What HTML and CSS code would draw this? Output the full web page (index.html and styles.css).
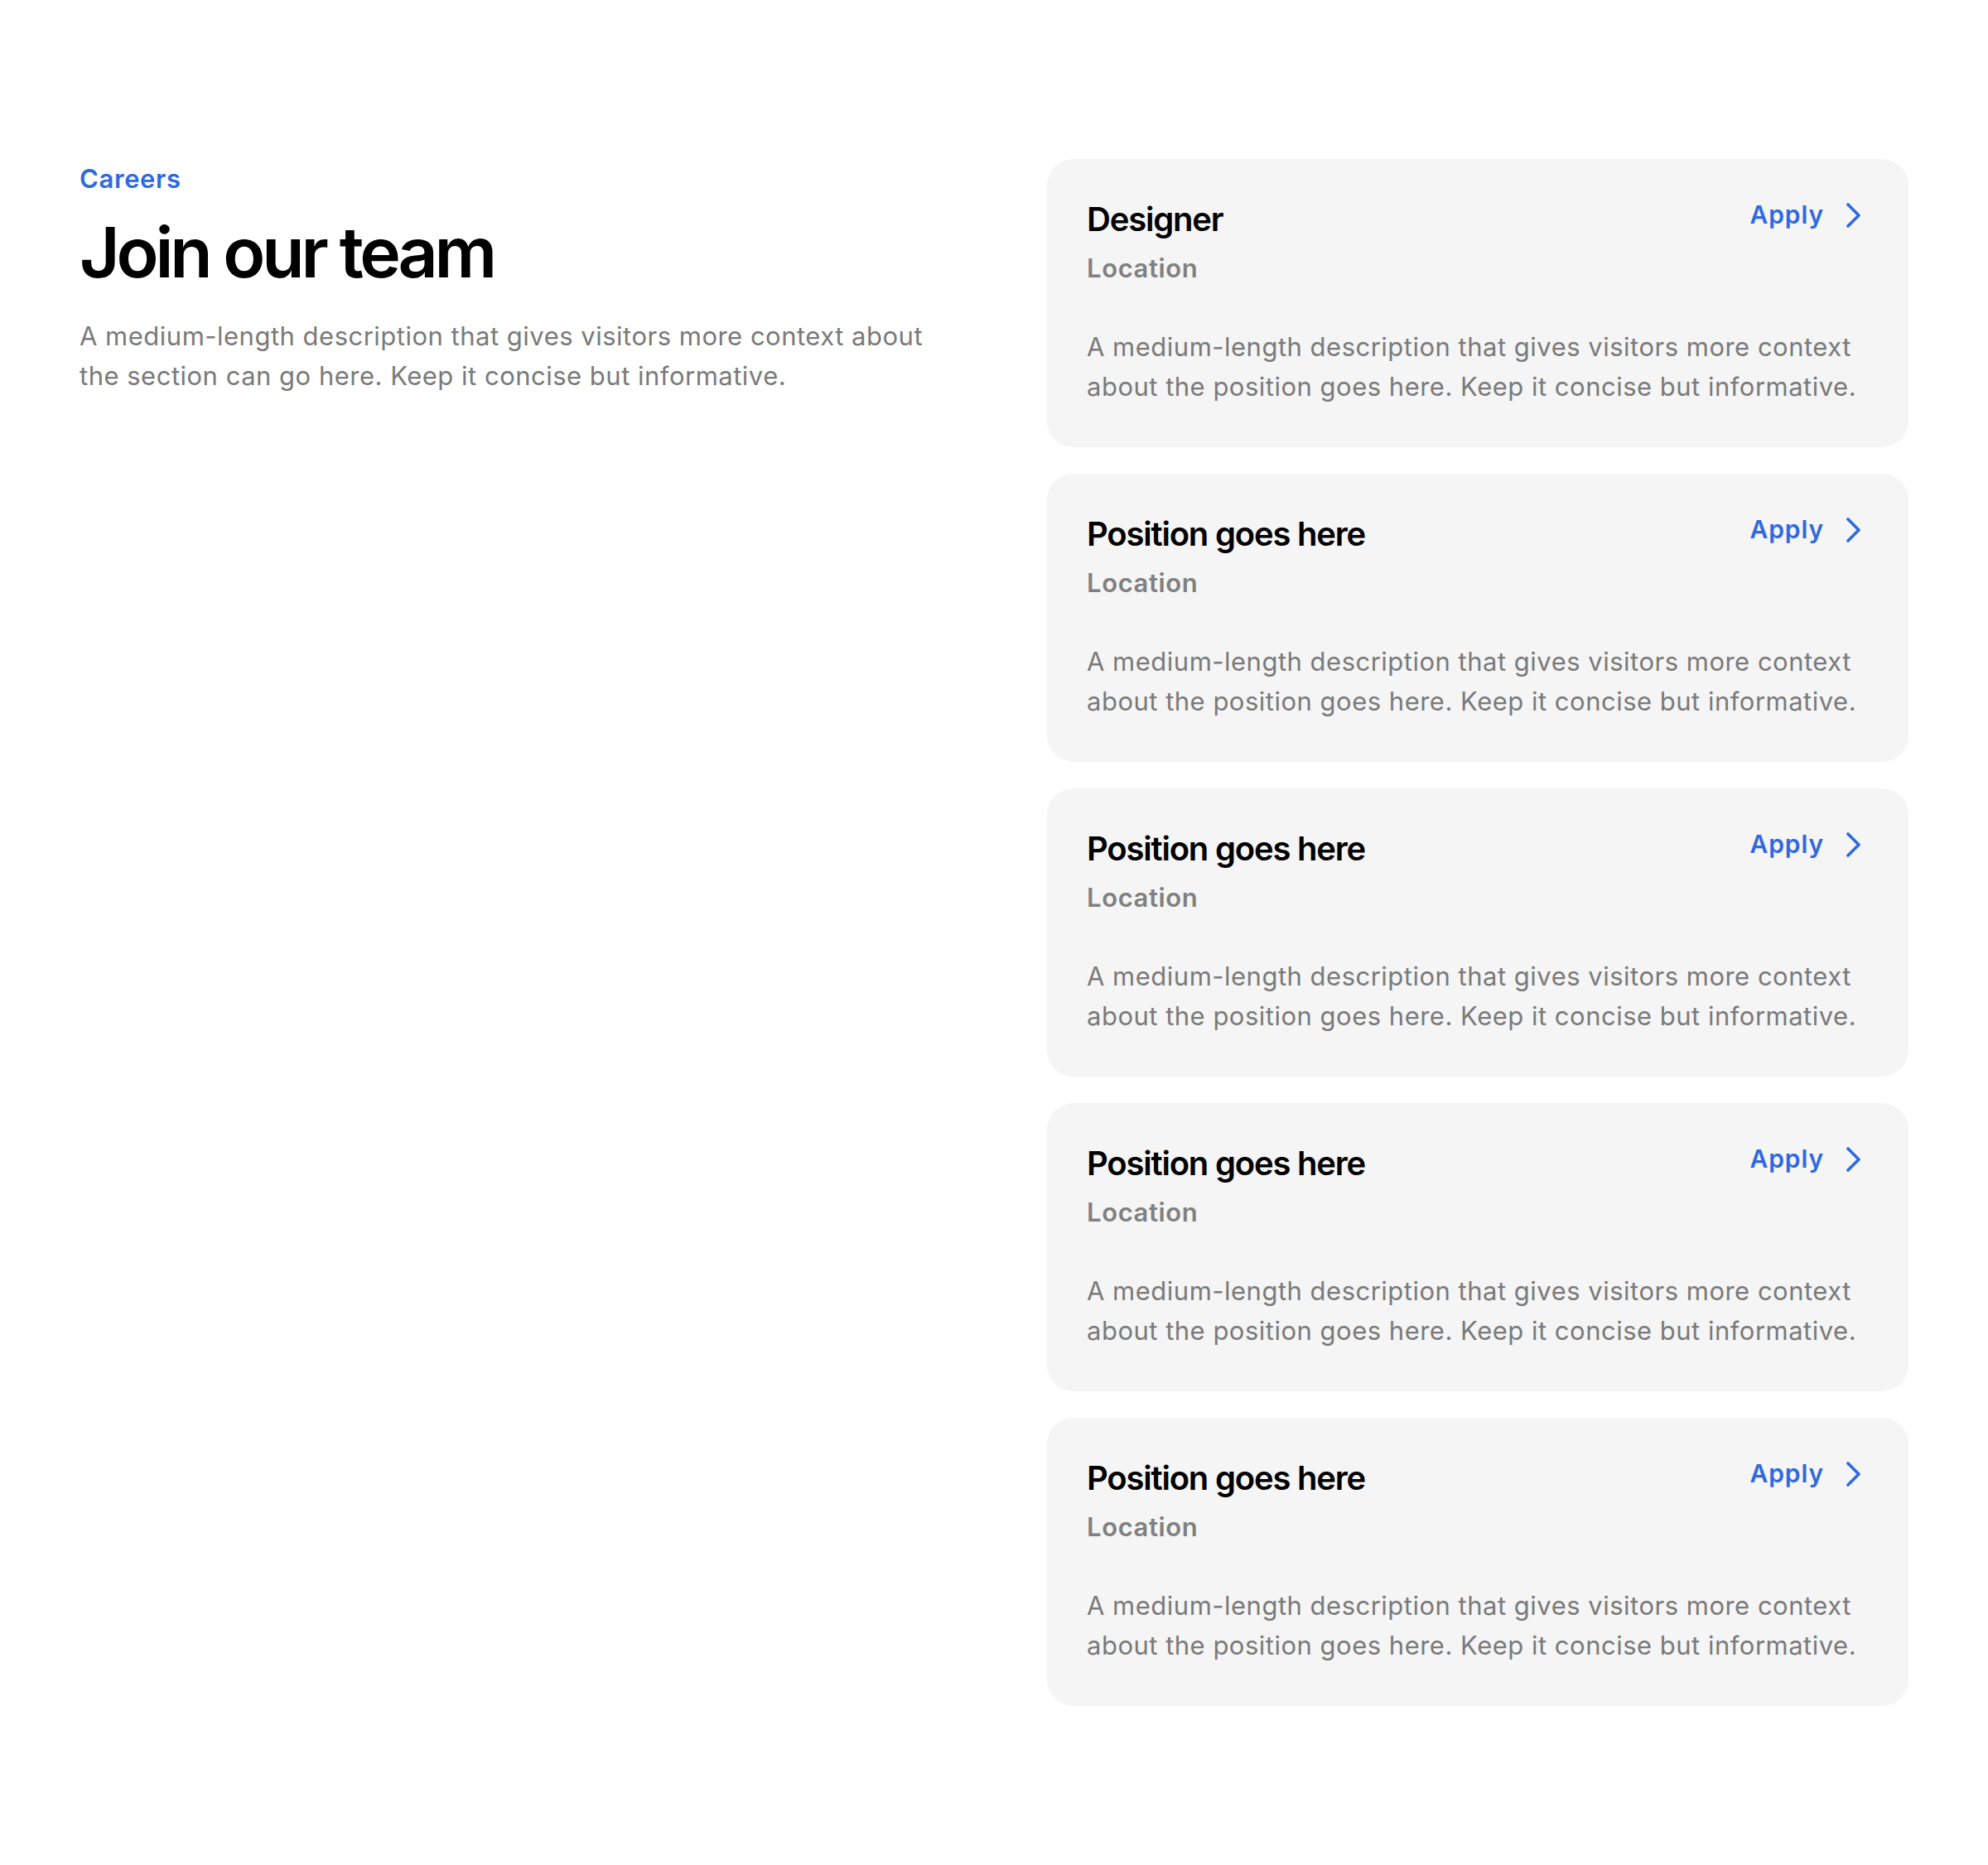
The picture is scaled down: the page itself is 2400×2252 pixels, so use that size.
FILE: index.html
```html
<!DOCTYPE html>
<html lang="en">
<head>
<meta charset="UTF-8" />
<meta name="viewport" content="width=device-width, initial-scale=1" />
<title>Careers</title>
<link rel="stylesheet" href="styles.css">
</head>
<body>
  <section class="careers">
    <!-- Intro column -->
    <div class="intro">
      <p class="tagline">Careers</p>
      <h1 class="heading">Join our team</h1>
      <p class="lead">A medium-length description that gives visitors more context about the section can go here. Keep it concise but informative.</p>
    </div>

    <!-- Job list -->
    <div class="jobs">
      <article class="job">
        <div class="job-top">
          <div>
            <h2 class="job-title">Designer</h2>
            <p class="job-location">Location</p>
          </div>
          <a class="apply" href="#">Apply
            <svg class="chevron" viewBox="0 0 18 32" width="18" height="32"><path d="M3 3l13 13L3 29" /></svg>
          </a>
        </div>
        <p class="job-text">A medium-length description that gives visitors more context about the position goes here. Keep it concise but informative.</p>
      </article>

      <article class="job">
        <div class="job-top">
          <div>
            <h2 class="job-title">Position goes here</h2>
            <p class="job-location">Location</p>
          </div>
          <a class="apply" href="#">Apply
            <svg class="chevron" viewBox="0 0 18 32" width="18" height="32"><path d="M3 3l13 13L3 29" /></svg>
          </a>
        </div>
        <p class="job-text">A medium-length description that gives visitors more context about the position goes here. Keep it concise but informative.</p>
      </article>

      <article class="job">
        <div class="job-top">
          <div>
            <h2 class="job-title">Position goes here</h2>
            <p class="job-location">Location</p>
          </div>
          <a class="apply" href="#">Apply
            <svg class="chevron" viewBox="0 0 18 32" width="18" height="32"><path d="M3 3l13 13L3 29" /></svg>
          </a>
        </div>
        <p class="job-text">A medium-length description that gives visitors more context about the position goes here. Keep it concise but informative.</p>
      </article>

      <article class="job">
        <div class="job-top">
          <div>
            <h2 class="job-title">Position goes here</h2>
            <p class="job-location">Location</p>
          </div>
          <a class="apply" href="#">Apply
            <svg class="chevron" viewBox="0 0 18 32" width="18" height="32"><path d="M3 3l13 13L3 29" /></svg>
          </a>
        </div>
        <p class="job-text">A medium-length description that gives visitors more context about the position goes here. Keep it concise but informative.</p>
      </article>

      <article class="job">
        <div class="job-top">
          <div>
            <h2 class="job-title">Position goes here</h2>
            <p class="job-location">Location</p>
          </div>
          <a class="apply" href="#">Apply
            <svg class="chevron" viewBox="0 0 18 32" width="18" height="32"><path d="M3 3l13 13L3 29" /></svg>
          </a>
        </div>
        <p class="job-text">A medium-length description that gives visitors more context about the position goes here. Keep it concise but informative.</p>
      </article>
    </div>
  </section>
</body>
</html>
```

FILE: styles.css
```css
/* Careers section */

body {
  margin: 0;
  background-color: #ffffff;
  font-family: Inter, "Noto Sans", sans-serif;
  color: #000;
}

p, h1, h2 {
  margin: 0;
}

.careers {
  display: grid;
  grid-template-columns: 1fr 1fr;
  column-gap: 128px;
  padding: 192px 96px;
  align-items: start;
}

/* Left column */
.tagline {
  color: #2f69e0;
  font-size: 31px;
  font-weight: 600;
  line-height: 48px;
  letter-spacing: 0.02em;
}

.heading {
  margin-top: 15px;
  font-size: 84px;
  font-weight: 600;
  line-height: 1.2;
  letter-spacing: -0.05em;
}

.lead {
  margin-top: 26px;
  color: #7a7a7a;
  font-size: 31px;
  line-height: 48px;
  letter-spacing: 0.016em;
}

/* Right column: list of positions */
.jobs {
  display: flex;
  flex-direction: column;
  gap: 32px;
}

.job {
  background-color: #f5f5f5;
  border-radius: 32px;
  padding: 45px 48px 49px;
}

.job-top {
  display: flex;
  justify-content: space-between;
  align-items: flex-start;
}

.job-title {
  font-size: 40px;
  font-weight: 600;
  line-height: 56px;
  letter-spacing: -0.03em;
}

.job-location {
  margin-top: 8px;
  color: #808080;
  font-size: 31px;
  font-weight: 600;
  line-height: 45px;
  letter-spacing: 0.02em;
}

.apply {
  display: flex;
  align-items: center;
  gap: 26px;
  color: #2f69e0;
  font-size: 30px;
  font-weight: 600;
  line-height: 45px;
  letter-spacing: 0.03em;
  text-decoration: none;
}

.chevron {
  fill: none;
  stroke: currentColor;
  stroke-width: 3.6;
  stroke-linecap: round;
  stroke-linejoin: round;
  margin-right: 10px;
}

.job-text {
  margin-top: 49px;
  color: #7a7a7a;
  font-size: 31px;
  line-height: 48px;
  letter-spacing: 0.016em;
}
```
